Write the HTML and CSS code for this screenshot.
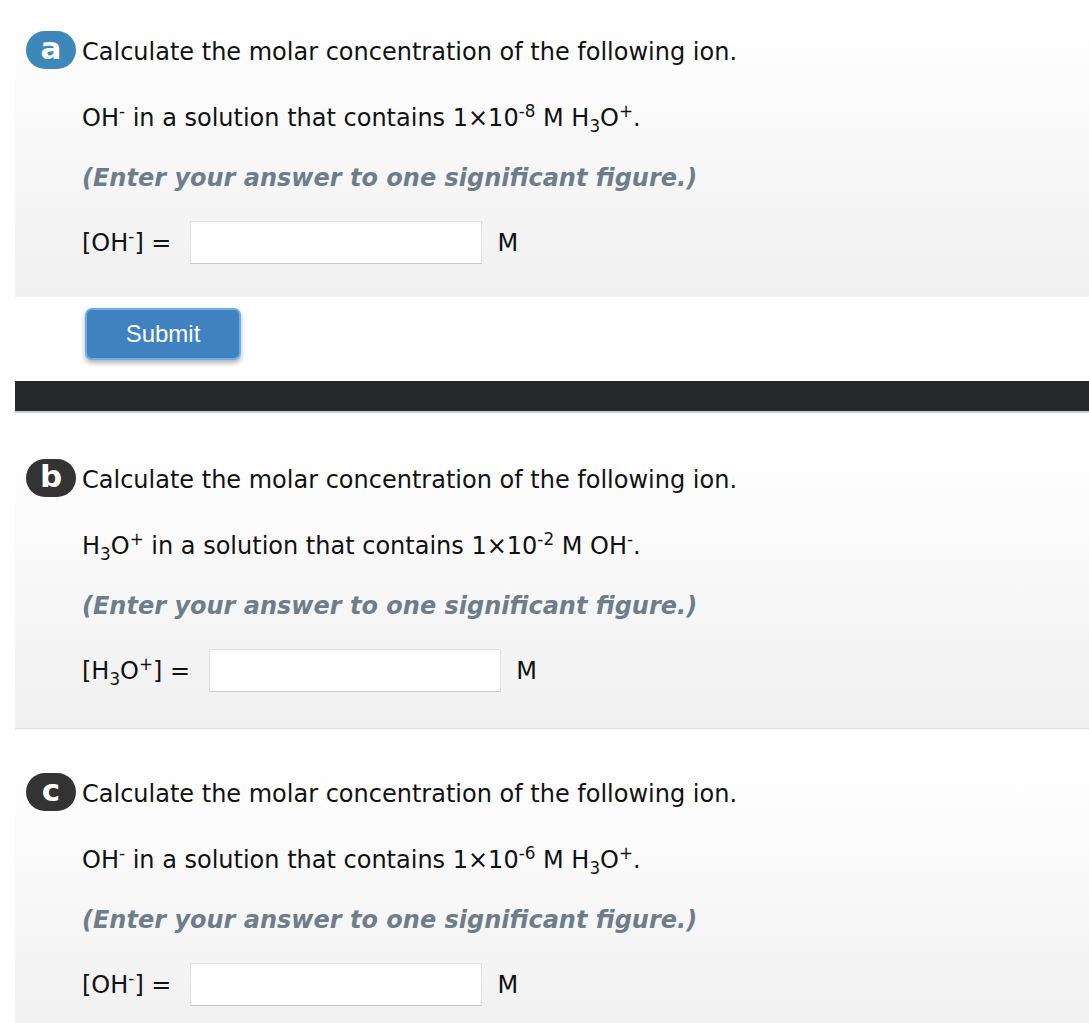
FILE: index.html
```html
<!doctype html>
<html lang="en">
  <head>
    <meta charset="UTF-8" />
    <meta name="viewport" content="width=device-width, initial-scale=1.0" />
    <title>Molar Concentration</title>
    <link rel="stylesheet" href="styles.css">
  </head>
  <body>
    <div class="page">
      <section class="part part-a">
        <div class="part-head">
          <span class="badge badge-active">a</span>
          <p class="prompt">Calculate the molar concentration of the following ion.</p>
        </div>
        <div class="part-body">
          <p class="given">OH<sup>-</sup> in a solution that contains 1&times;10<sup>-8</sup> M H<sub>3</sub>O<sup>+</sup>.</p>
          <p class="hint">(Enter your answer to one significant figure.)</p>
          <div class="answer">
            <label class="answer-label">[OH<sup>-</sup>] =</label>
            <input class="answer-input" type="text">
            <span class="unit">M</span>
          </div>
        </div>
      </section>

      <div class="actions">
        <button class="submit" type="button">Submit</button>
      </div>

      <div class="divider"></div>

      <section class="part part-b">
        <div class="part-head">
          <span class="badge">b</span>
          <p class="prompt">Calculate the molar concentration of the following ion.</p>
        </div>
        <div class="part-body">
          <p class="given">H<sub>3</sub>O<sup>+</sup> in a solution that contains 1&times;10<sup>-2</sup> M OH<sup>-</sup>.</p>
          <p class="hint">(Enter your answer to one significant figure.)</p>
          <div class="answer">
            <label class="answer-label">[H<sub>3</sub>O<sup>+</sup>] =</label>
            <input class="answer-input" type="text">
            <span class="unit">M</span>
          </div>
        </div>
      </section>

      <section class="part part-c">
        <div class="part-head">
          <span class="badge">c</span>
          <p class="prompt">Calculate the molar concentration of the following ion.</p>
        </div>
        <div class="part-body">
          <p class="given">OH<sup>-</sup> in a solution that contains 1&times;10<sup>-6</sup> M H<sub>3</sub>O<sup>+</sup>.</p>
          <p class="hint">(Enter your answer to one significant figure.)</p>
          <div class="answer">
            <label class="answer-label">[OH<sup>-</sup>] =</label>
            <input class="answer-input" type="text">
            <span class="unit">M</span>
          </div>
        </div>
      </section>
    </div>
  </body>
</html>
```

FILE: styles.css
```css
body {
  margin: 0;
  background: white;
  color: #111;
  font-family: Verdana, "DejaVu Sans", sans-serif;
  font-size: 24px;
}
.page {
  padding-left: 15px;
}

/* Question panels */
.part {
  padding: 11px 0 32px 11px;
  background: linear-gradient(to bottom, #ffffff, #f0f0f0);
}
.part-a {
  margin-top: 20px;
  padding-bottom: 33px;
}
.part-b {
  margin-top: 35px;
  padding-bottom: 36px;
  border-bottom: 1px solid #d9d9d9;
}
.part-c {
  margin-top: 33px;
}
.part-head {
  display: flex;
  align-items: center;
  gap: 6px;
  height: 38px;
}
.badge {
  display: flex;
  align-items: center;
  justify-content: center;
  width: 50px;
  height: 38px;
  border-radius: 19px;
  background: #333;
  color: white;
  font-family: "DejaVu Sans", sans-serif;
  font-weight: bold;
  font-size: 31px;
  line-height: 1;
  padding-bottom: 3px;
  box-sizing: border-box;
}
.badge-active {
  background: #3d88b9;
}
.prompt {
  margin: 0;
  line-height: 30px;
  padding-top: 4px;
}
.part-body {
  padding-left: 56px;
}
.given {
  margin: 34px 0 0;
  line-height: 30px;
}
.hint {
  margin: 30px 0 0;
  line-height: 30px;
  color: #6f7d8b;
  font-weight: bold;
  font-style: italic;
}
sup, sub {
  font-size: 70%;
  line-height: 0;
}

/* Answer row */
.answer {
  display: flex;
  align-items: center;
  margin-top: 28px;
}
.answer-label {
  margin-right: 19px;
}
.answer-input {
  width: 292px;
  height: 43px;
  box-sizing: border-box;
  border: 1px solid #e2e2e2;
  border-bottom-color: #c8c8c8;
  background: white;
  margin: 0;
}
.unit {
  margin-left: 15px;
}

/* Submit */
.actions {
  padding: 11px 0 0 70px;
}
.submit {
  width: 156px;
  height: 52px;
  border: 2px solid #6cb0e3;
  border-radius: 7px;
  background: #3f82bf;
  color: white;
  font-family: "Liberation Sans", Arial, sans-serif;
  font-size: 24px;
  box-shadow: 0 3px 5px rgba(0, 0, 0, 0.3);
}

.divider {
  margin-top: 21px;
  height: 30px;
  background: #272829;
  border-bottom: 2px solid #cccccc;
}
```
